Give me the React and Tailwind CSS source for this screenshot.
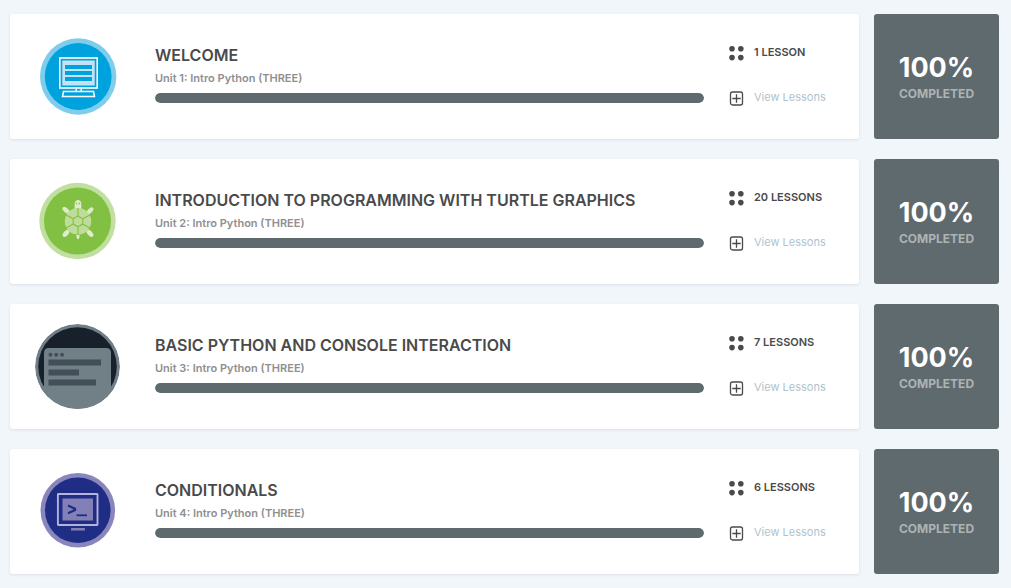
function ComputerIcon() {
  return (
    <svg viewBox="0 0 85 85" className="size-[85px] shrink-0" aria-hidden="true">
      <circle cx="43.2" cy="42.5" r="38.2" fill="#7ecdec" />
      <circle cx="43.2" cy="42.5" r="33.4" fill="#00a2dd" />
      <rect x="24.8" y="24" width="37.4" height="30" fill="none" stroke="#fff" strokeWidth="1.6" />
      <rect x="27.3" y="26.5" width="32.4" height="25" fill="#c3e2f6" />
      <path d="M30 31h27v4H30zM30 37h27v4H30zM30 43h27v4H30z" fill="#00a2dd" />
      <path d="M41.2 54.5v3M46.2 54.5v3" stroke="#fff" strokeWidth="1.4" />
      <path d="M28.500 57.5h30l1 5H27.500z" fill="none" stroke="#fff" strokeWidth="1.5" />
    </svg>
  );
}

function TurtleIcon() {
  return (
    <svg viewBox="0 0 85 85" className="size-[85px] shrink-0" aria-hidden="true">
      <circle cx="42.5" cy="42" r="38.2" fill="#c0dfa0" />
      <circle cx="42.5" cy="42" r="33.5" fill="#82c043" />
      <g fill="#dcedc8">
        <path d="M39.7 30v-5.500c0-4.800 6.600-4.800 6.600 0V30z" />
        <ellipse cx="31" cy="31.200" rx="4.200" ry="2.200" transform="rotate(40 31 31.200)" />
        <ellipse cx="55" cy="31.800" rx="4.200" ry="2.200" transform="rotate(-45 55 31.800)" />
        <ellipse cx="31" cy="54.300" rx="4.200" ry="2.400" transform="rotate(-48 31 54.300)" />
        <ellipse cx="55" cy="54.300" rx="4.200" ry="2.400" transform="rotate(48 55 54.300)" />
        <path d="M41.300 56h3.400l-.6 3.500q-1.100 1.500-2.200 0z" />
      </g>
      <path d="M40.900 24.500h1.300M43.800 24.500h1.300" stroke="#82c043" strokeWidth="1.300" />
      <circle cx="43" cy="42.300" r="13.200" fill="#c0dc9a" />
      <path
        d="M43 37l4.800 2.700v5.400L43 47.800l-4.800-2.700v-5.400zM43 37v-8M47.800 39.700l7-3.700M47.800 45.100l7 3.900M43 47.800v8M38.200 45.100l-7 3.900M38.200 39.700l-7-3.700"
        fill="none"
        stroke="#82c043"
        strokeWidth="1.100"
      />
    </svg>
  );
}

function ConsoleIcon() {
  return (
    <svg viewBox="0 0 85 85" className="size-[85px] shrink-0" aria-hidden="true">
      <clipPath id="console-clip">
        <circle cx="42.500" cy="42.500" r="42.500" />
      </clipPath>
      <g clipPath="url(#console-clip)">
        <circle cx="42.500" cy="42.500" r="42.500" fill="#717f87" />
        <circle cx="42.500" cy="42.500" r="39.300" fill="#18212b" />
        <path d="M0 62.500h9V29q0-5 5-5h57q5 0 5 5v33.500h9V85H0z" fill="#717f87" />
      </g>
      <g fill="#434f58">
        <circle cx="15.500" cy="30.700" r="2" />
        <circle cx="21.200" cy="30.700" r="2" />
        <circle cx="27" cy="30.700" r="2" />
        <path d="M13.500 35.500H66v6H13.500zM13.500 45.500H44v6H13.500zM13.500 55.500H61v6H13.500z" />
      </g>
    </svg>
  );
}

function TerminalIcon() {
  return (
    <svg viewBox="0 0 85 85" className="size-[85px] shrink-0" aria-hidden="true">
      <circle cx="42.800" cy="41.300" r="37.300" fill="#8986bd" />
      <circle cx="42.800" cy="41.300" r="32.800" fill="#1f2d84" />
      <rect x="22.900" y="25" width="39.600" height="31" rx="0.500" fill="none" stroke="#b5b2dc" strokeWidth="1.900" />
      <rect x="27.500" y="29.500" width="30.500" height="22" fill="#8380b8" />
      <path d="M33 36.500l7 3.300v1.200l-7 3.300" fill="none" stroke="#1f2d84" strokeWidth="2.200" />
      <path d="M41.500 46.300H52" stroke="#1f2d84" strokeWidth="1.800" />
      <rect x="36" y="59" width="14" height="2.600" rx="0.500" fill="#8380b8" />
    </svg>
  );
}

function DotsIcon() {
  return (
    <svg viewBox="0 0 16 20" className="h-5 w-4 shrink-0 fill-[#4a4a4a]" aria-hidden="true">
      <circle cx="3" cy="6.800" r="2.800" />
      <circle cx="11.800" cy="6.800" r="2.800" />
      <circle cx="3" cy="15.600" r="2.800" />
      <circle cx="11.800" cy="15.600" r="2.800" />
    </svg>
  );
}

function PlusIcon() {
  return (
    <svg viewBox="0 0 16 20" className="h-5 w-4 shrink-0" fill="none" stroke="#4a4a4a" aria-hidden="true">
      <rect x="1.500" y="5" width="12" height="13" rx="2" strokeWidth="1.300" />
      <path d="M7.500 7.300v8.400M3.300 11.500h8.400" strokeWidth="1.300" />
    </svg>
  );
}

const units = [
  { title: "WELCOME", unit: "Unit 1: Intro Python (THREE)", lessons: "1 LESSON", percent: 100, Icon: ComputerIcon },
  {
    title: "INTRODUCTION TO PROGRAMMING WITH TURTLE GRAPHICS",
    unit: "Unit 2: Intro Python (THREE)",
    lessons: "20 LESSONS",
    percent: 100,
    Icon: TurtleIcon,
  },
  {
    title: "BASIC PYTHON AND CONSOLE INTERACTION",
    unit: "Unit 3: Intro Python (THREE)",
    lessons: "7 LESSONS",
    percent: 100,
    Icon: ConsoleIcon,
  },
  { title: "CONDITIONALS", unit: "Unit 4: Intro Python (THREE)", lessons: "6 LESSONS", percent: 100, Icon: TerminalIcon },
];

function UnitRow({ title, unit, lessons, percent, Icon }) {
  return (
    <li className="flex gap-[15px]">
      <article className="flex min-w-0 flex-1 items-center rounded-[3px] bg-white px-[25px] py-5 shadow-[0_1px_3px_rgba(60,80,100,0.12)]">
        <Icon />
        <div className="ml-[35px] min-w-0 flex-1 self-start pt-2">
          <h2 className="text-base leading-[26px] font-semibold text-[#4a4a4a]">{title}</h2>
          <p className="text-[11px] leading-5 font-semibold text-[#8f8f8f]">{unit}</p>
          <div
            role="progressbar"
            aria-label={title}
            aria-valuenow={percent}
            aria-valuemin={0}
            aria-valuemax={100}
            className="mt-[5px] h-[10px] overflow-hidden rounded-full bg-[#e4eaed]"
          >
            <div className="h-full rounded-full bg-[#5f6a6e]" style={{ width: `${percent}%` }} />
          </div>
        </div>
        <div className="ml-[25px] flex w-[105px] shrink-0 flex-col gap-[25px] self-start pt-2">
          <div className="flex items-center gap-[9px] text-[11px] leading-5 font-semibold whitespace-nowrap text-[#4a4a4a]">
            <DotsIcon />
            <span>{lessons}</span>
          </div>
          <button
            type="button"
            className="flex cursor-pointer items-center gap-[9px] text-[11px] leading-5 whitespace-nowrap text-[#afc3cd]"
          >
            <PlusIcon />
            <span>View Lessons</span>
          </button>
        </div>
      </article>
      <div className="flex w-[125px] shrink-0 flex-col items-center justify-center rounded-[3px] bg-[#5f6a6e] pt-[3px]">
        <strong className="text-[27px] leading-8 font-bold text-white">{percent}%</strong>
        <span className="text-[12px] leading-5 font-bold text-[#adb3b5]">COMPLETED</span>
      </div>
    </li>
  );
}

export default function App() {
  return (
    <main className="min-h-screen bg-[#f1f6fa] pt-[14px] pr-3 pb-[14px] pl-[10px] font-['Inter',sans-serif]">
      <ul className="flex flex-col gap-5">
        {units.map((u) => (
          <UnitRow key={u.title} {...u} />
        ))}
      </ul>
    </main>
  );
}
